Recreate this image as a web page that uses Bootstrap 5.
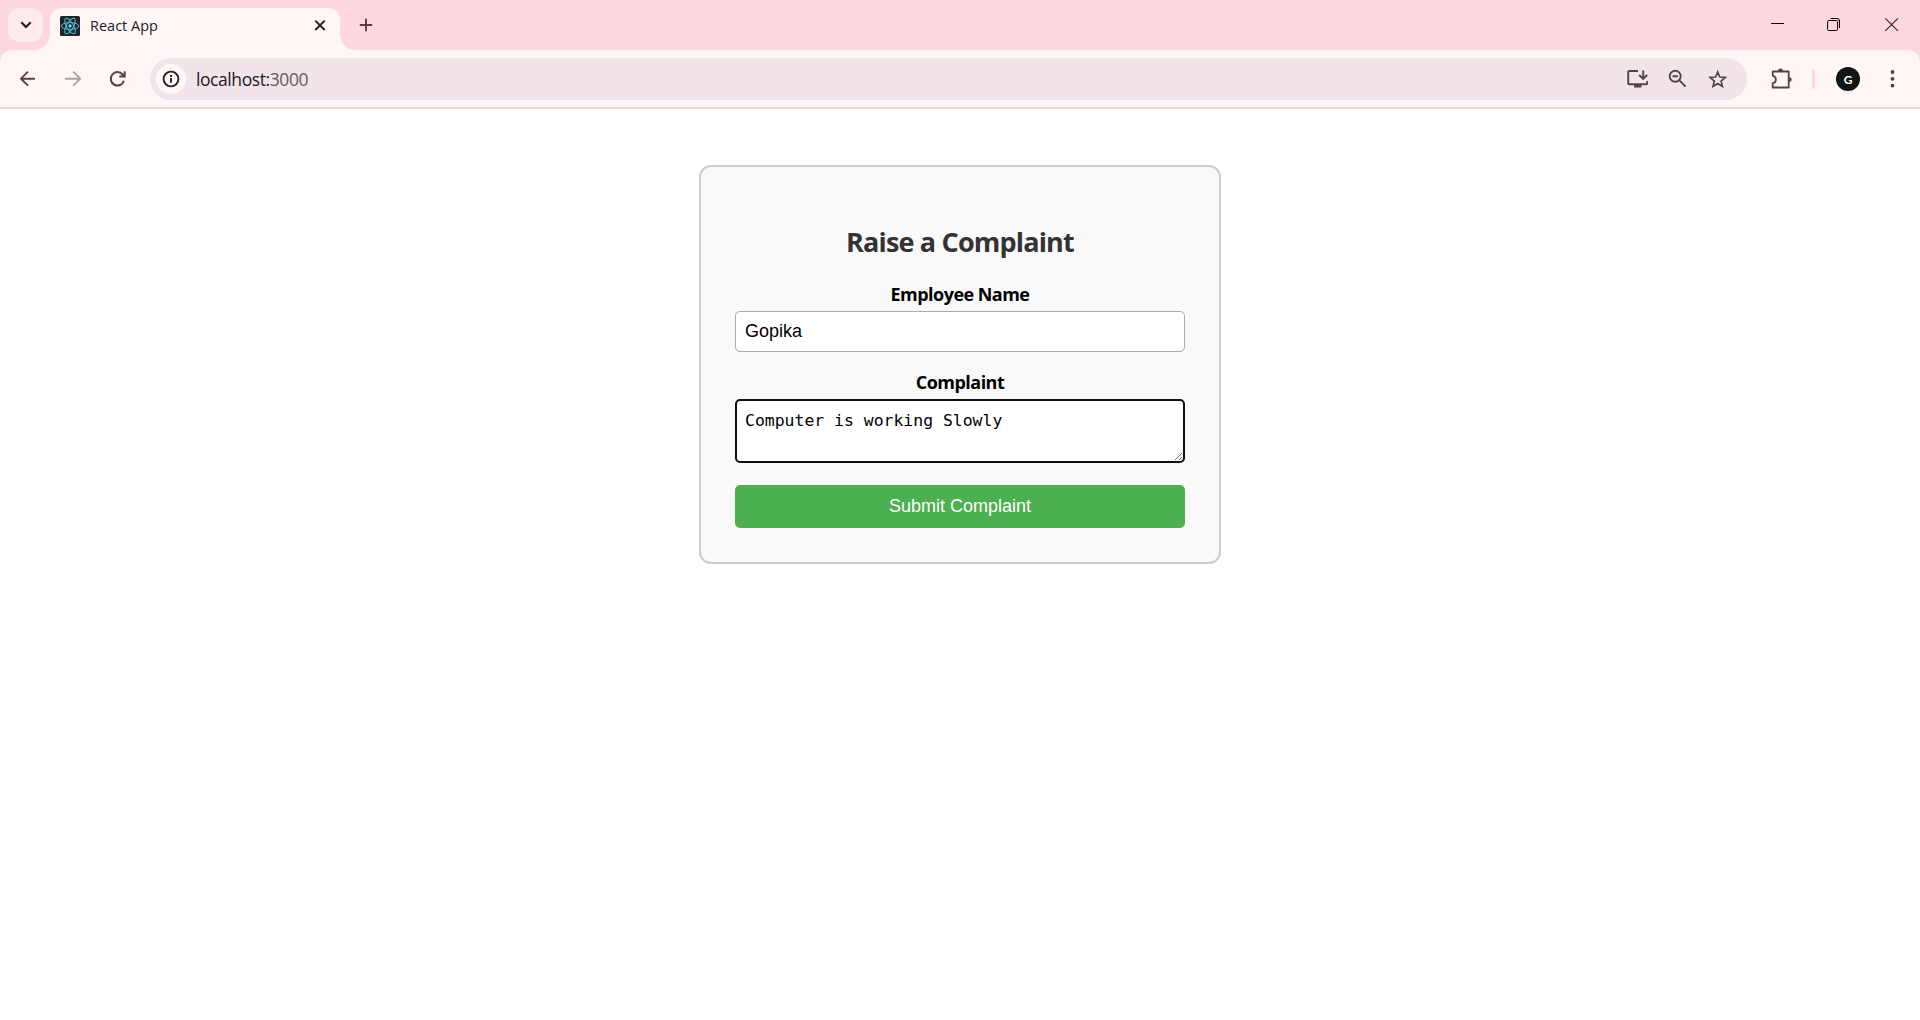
<!DOCTYPE html>
<html lang="en">
<head>
<meta charset="utf-8">
<title>React App</title>
<link rel="stylesheet" href="https://cdn.jsdelivr.net/npm/bootstrap@5.3.0/dist/css/bootstrap.min.css">
<style>
body{font-family:"Open Sans","Noto Sans",sans-serif;color:#000;background:#fff;height:1020px;overflow:hidden}
svg{display:block;flex:none}
.tabstrip{height:50px;background:#ffd7de}
.tab-search{width:35px;height:34px;margin:8px 7px 0 8px;border-radius:12px;background:#ffebee}
.browser-tab{width:290px;height:42px;margin-top:8px;padding:0 12px 6px 10px;background:#fff7f5;border-radius:12px 12px 0 0;position:relative}
.browser-tab::before,.browser-tab::after{content:"";position:absolute;bottom:0;width:15px;height:15px}
.browser-tab::before{left:-15px;background:radial-gradient(circle at 0 0,transparent 14.5px,#fff7f5 15px)}
.browser-tab::after{right:-15px;background:radial-gradient(circle at 100% 0,transparent 14.5px,#fff7f5 15px)}
.tab-title{font-size:14.5px;line-height:20px;margin-left:10px;color:#231c1e}
.new-tab{margin:18px 0 0 19px}
.window-controls{padding:17px 20px 0 0;gap:42px}
.toolbar-wrap{background:#ffd7de}
.toolbar{height:59px;background:#fff7f5;border-bottom:2px solid #f3dadd;border-radius:12px 12px 0 0;padding:8px 16px 0 17px}
.nav-icons{height:42px;gap:25px}
.omnibox{height:42px;width:1597px;margin-left:23px;padding:0 19px 0 6px;border-radius:21px;background:#f1e4ea}
.site-info{width:30px;height:30px;border-radius:50%;background:#fff7f5}
.url-text{font-size:17.5px;line-height:24px;letter-spacing:-.42px;margin-left:10px;color:#1f1a1c}
.url-text span{color:#6a5a5e}
.page-icons{gap:20px}
.right-icons{height:42px;margin-left:24px}
.divider{width:3px;height:20px;margin:0 21px 0 19px;border-radius:2px;background:#ffd7de}
.avatar{width:24px;height:24px;margin-right:30px;border-radius:50%;background:#111514;color:#fff;font:700 12px Lato,sans-serif}
.complaint-box{width:522px;height:399px;margin-top:56px;padding:56px 34px 0;border:2px solid #ccc;border-radius:12px;background:#f9f9f9}
.complaint-title{font-size:27px;font-weight:700;line-height:38px;letter-spacing:-.82px;color:#333;margin:0 0 21px}
.field-label{display:block;font-size:18px;font-weight:700;line-height:24px;letter-spacing:-.53px;margin-bottom:5px}
.form-control.field-input{height:41px;margin-bottom:18px;padding:0 9px;border:1px solid #aaa;border-radius:5px;font:18px "Liberation Sans",sans-serif;color:#000}
.form-control.field-area{height:64px;min-height:0;margin-bottom:22px;padding:9px 8px;border:2px solid #101010;border-radius:5px;font:16.45px/21px "DejaVu Sans Mono",monospace;color:#000}
.btn.submit-btn{height:43px;padding:0;border:0;border-radius:5px;background:#4caf50;color:#fff;font:18px "Liberation Sans",sans-serif}
</style>
</head>
<body>
<header>
  <div class="tabstrip d-flex">
    <div class="tab-search d-flex align-items-center justify-content-center">
      <svg width="12" height="8" viewBox="0 0 12 8" fill="none" stroke="#251a1d" stroke-width="2.2"><path d="M1.3 1.3 6 6l4.7-4.7"/></svg>
    </div>
    <div class="browser-tab d-flex align-items-center">
      <svg width="20" height="20" viewBox="0 0 20 20"><rect width="20" height="20" rx="1.5" fill="#212426"/><g fill="none" stroke="#53bcd3" stroke-width="1"><ellipse cx="10" cy="10" rx="8.8" ry="3.4"/><ellipse cx="10" cy="10" rx="8.8" ry="3.4" transform="rotate(60 10 10)"/><ellipse cx="10" cy="10" rx="8.8" ry="3.4" transform="rotate(120 10 10)"/></g><circle cx="10" cy="10" r="1.7" fill="#61dafb"/></svg>
      <span class="tab-title">React App</span>
      <svg class="ms-auto" width="16" height="16" viewBox="0 0 16 16" fill="none" stroke="#251a1d" stroke-width="1.9"><path d="M3.300 2.600l9.400 9.400M12.700 2.600l-9.400 9.400"/></svg>
    </div>
    <svg class="new-tab" width="14" height="14" viewBox="0 0 14 14" stroke="#5b3d43" stroke-width="1.9"><path d="M7 .8v12.400M.8 7h12.400"/></svg>
    <div class="window-controls d-flex ms-auto">
      <svg width="14" height="14" viewBox="0 0 14 14"><path d="M0 6.500h13" stroke="#000"/></svg>
      <svg width="15" height="15" viewBox="0 0 15 15" fill="none" stroke="#000"><rect x=".6" y="3.500" width="10" height="10" rx="1"/><path d="M3.500 1.500h6.500a2.500 2.500 0 0 1 2.500 2.500v7"/></svg>
      <svg width="16" height="15" viewBox="0 0 16 15" stroke="#2c2225" stroke-width="1.100"><path d="M1.300 1.300l12.600 12.600M13.900 1.300L1.300 13.900"/></svg>
    </div>
  </div>
  <div class="toolbar-wrap">
    <div class="toolbar d-flex">
      <div class="nav-icons d-flex align-items-center">
        <svg width="20" height="20" viewBox="0 0 20 20" fill="none" stroke="#5b3d43" stroke-width="1.900"><path d="M18 9.700H4.500M11 2.700l-7 7 7 7"/></svg>
        <svg width="20" height="20" viewBox="0 0 20 20" fill="none" stroke="#ada1a2" stroke-width="1.900"><path d="M3 9.700h14.200M11.200 2.700l7 7-7 7"/></svg>
        <svg width="20" height="20" viewBox="0 0 20 20" fill="none" stroke="#5b3d43" stroke-width="2"><path d="M16.900 11.700A6.700 6.700 0 1 1 15.600 5.500l1.500 1.700M17.700 2.200v5.400h-5.400"/></svg>
      </div>
      <div class="omnibox d-flex align-items-center">
        <div class="site-info d-flex align-items-center justify-content-center">
          <svg width="18" height="18" viewBox="0 0 18 18" fill="none" stroke="#2a2022" stroke-width="1.900"><circle cx="9" cy="9" r="7.400"/><path d="M9 8v4.800M9 5v2"/></svg>
        </div>
        <div class="url-text">localhost:<span>3000</span></div>
        <div class="page-icons d-flex align-items-center ms-auto">
          <svg width="22" height="20" viewBox="0 0 22 20" fill="none" stroke="#574449" stroke-width="1.900"><path d="M12 2H3.200a1 1 0 0 0-1 1v11.200a1 1 0 0 0 1 1h17a1 1 0 0 0 1-1V12"/><path d="M17.200 1.500v8M13.200 6l4 4 4-4"/><path d="M8 17h7.500" stroke-width="3"/></svg>
          <svg width="20" height="20" viewBox="0 0 20 20" fill="none" stroke="#574449" stroke-width="1.900"><circle cx="7.200" cy="7.200" r="5.500"/><path d="M11.200 11.200l6.400 6.500M4.500 7.200h5.400"/></svg>
          <svg width="20" height="20" viewBox="0 0 20 20" fill="none" stroke="#574449" stroke-width="1.700"><path d="M9.700 3l2.100 5 5.500.5-4.200 3.600 1.300 5.400-4.700-2.900L5 17.500l1.300-5.400-4.200-3.600L7.600 8z"/></svg>
        </div>
      </div>
      <div class="right-icons d-flex align-items-center">
        <svg width="22" height="22" viewBox="0 0 22 22" fill="none" stroke="#5b3d43" stroke-width="1.800"><path d="M1.700 3.500h16v16h-16v-4.300c4.200-.6 4.200-6.800 0-7.400z" stroke-linejoin="round"/><path d="M7 3a2.500 2.500 0 0 1 5 0zM18.200 9a2.500 2.500 0 0 1 0 5z" fill="#5b3d43" stroke="none"/></svg>
        <div class="divider"></div>
        <div class="avatar d-flex align-items-center justify-content-center">G</div>
        <svg width="5" height="20" viewBox="0 0 5 20" fill="#5b3d43"><circle cx="2.500" cy="3" r="1.900"/><circle cx="2.500" cy="9.800" r="1.900"/><circle cx="2.500" cy="16.600" r="1.900"/></svg>
      </div>
    </div>
  </div>
</header>
<main class="d-flex justify-content-center">
  <form class="complaint-box text-center">
    <h2 class="complaint-title">Raise a Complaint</h2>
    <label class="field-label" for="employee">Employee Name</label>
    <input id="employee" class="form-control field-input" value="Gopika">
    <label class="field-label" for="complaint">Complaint</label>
    <textarea id="complaint" class="form-control field-area" spellcheck="false">Computer is working Slowly</textarea>
    <button type="button" class="btn submit-btn w-100">Submit Complaint</button>
  </form>
</main>
<script src="https://cdn.jsdelivr.net/npm/bootstrap@5.3.0/dist/js/bootstrap.bundle.min.js"></script>
</body>
</html>
